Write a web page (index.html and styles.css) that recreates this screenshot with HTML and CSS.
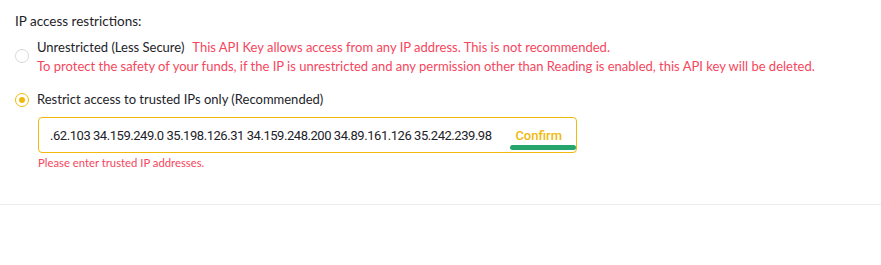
FILE: index.html
```html
<!DOCTYPE html>
<html>
<head>
<meta charset="utf-8">
<link rel="stylesheet" href="styles.css">
</head>
<body>
<div class="section">
  <div class="title">IP access restrictions:</div>
  <div class="option">
    <span class="radio"></span>
    <div class="option-text">
      <div><span class="label">Unrestricted (Less Secure)</span><span class="warn warn-inline">This API Key allows access from any IP address. This is not recommended.</span></div>
      <div class="warn">To protect the safety of your funds, if the IP is unrestricted and any permission other than Reading is enabled, this API key will be deleted.</div>
    </div>
  </div>
  <div class="option option-checked">
    <span class="radio radio-on"></span>
    <div class="option-text"><span class="label">Restrict access to trusted IPs only (Recommended)</span></div>
  </div>
  <div class="ip-block">
    <div class="ip-input">
      <div class="ip-value">.62.103 34.159.249.0 35.198.126.31 34.159.248.200 34.89.161.126 35.242.239.98</div>
      <div class="confirm">Confirm<span class="mark"></span></div>
    </div>
    <div class="error">Please enter trusted IP addresses.</div>
  </div>
</div>
<div class="divider"></div>
</body>
</html>
```
FILE: styles.css
```css
html, body { margin: 0; padding: 0; background: #fff; }
body { font-family: "Lato", "Noto Sans", sans-serif; color: #1e2329; width: 881px; height: 265px; overflow: hidden; }
.section { padding: 11px 0 0 15px; }
.title { font-size: 13.5px; line-height: 20px; color: #1e2329; }
.option { display: flex; align-items: flex-start; margin-top: 7px; }
.radio { flex: none; width: 12px; height: 12px; border: 1px solid #d5d8dc; border-radius: 50%; margin-top: 11px; box-sizing: content-box; }
.option-text { margin-left: 8px; font-size: 13px; line-height: 19px; }
.label { color: #1e2329; }
.warn { color: #f6465d; }
.warn-inline { margin-left: 8px; }
.option-checked { margin-top: 14px; align-items: center; }
.option-checked .radio { margin-top: 0; }
.radio-on { border-color: #f0b90b; position: relative; }
.radio-on::after { content: ""; position: absolute; left: 3px; top: 3px; width: 6px; height: 6px; border-radius: 50%; background: #f0b90b; }
.ip-block { padding-left: 23px; margin-top: 8px; }
.ip-input { width: 539px; height: 36px; box-sizing: border-box; border: 1px solid #f0b90b; border-radius: 4px; display: flex; align-items: center; padding: 0 14px 0 11px; }
.ip-value { flex: 1; min-width: 0; overflow: hidden; white-space: nowrap; font-family: "Roboto", sans-serif; font-size: 13px; letter-spacing: -0.45px; color: #1e2329; }
.confirm { position: relative; flex: none; margin-left: 8px; font-family: "Roboto", sans-serif; font-size: 13px; font-weight: 500; color: #f0b90b; }
.mark { position: absolute; left: -5px; right: -14px; bottom: -7px; height: 5px; border-radius: 3px; background: #25a46b; }
.error { font-size: 11.3px; line-height: 16px; color: #f6465d; margin-top: 2px; }
.divider { margin-top: 33px; height: 1px; background: #eaecef; }
```
